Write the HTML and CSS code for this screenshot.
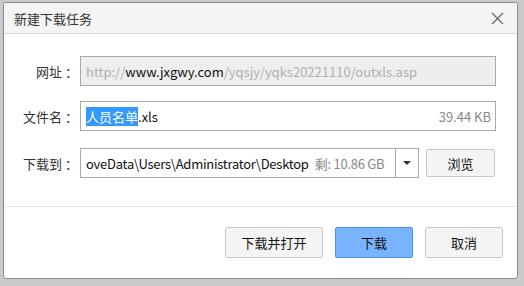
FILE: index.html
```html
<!DOCTYPE html>
<html lang="zh-CN">
<head>
    <meta charset="UTF-8">
    <title>新建下载任务</title>
    <link rel="stylesheet" href="styles.css">
</head>
<body>
    <div class="dialog">
        <!-- Title bar -->
        <div class="titlebar">
            <span class="title">新建下载任务</span>
            <svg class="close" width="13" height="13" viewBox="0 0 13 13">
                <path d="M1 1 L12 12 M12 1 L1 12" stroke="#666" stroke-width="1.2" fill="none"/>
            </svg>
        </div>

        <div class="form">
            <div class="row">
                <label>网址<span class="colon">：</span></label>
                <div class="field readonly">
                    <span class="muted">http://</span><span class="host">www.jxgwy.com</span><span class="muted">/yqsjy/yqks20221110/outxls.asp</span>
                </div>
            </div>
            <div class="row row-file">
                <label>文件名<span class="colon">：</span></label>
                <div class="field">
                    <span class="name"><span class="sel">人员名单</span>.xls</span>
                    <span class="size">39.44 KB</span>
                </div>
            </div>
            <div class="row row-path">
                <label>下载到<span class="colon">：</span></label>
                <div class="field path">
                    <div class="path-text">
                        <span>oveData\Users\Administrator\Desktop</span>
                        <span class="free">剩: 10.86 GB</span>
                    </div>
                    <div class="drop"><span class="caret"></span></div>
                </div>
                <button class="btn browse">浏览</button>
            </div>
        </div>

        <div class="actions">
            <button class="btn open">下载并打开</button>
            <button class="btn primary">下载</button>
            <button class="btn cancel">取消</button>
        </div>
    </div>
</body>
</html>
```

FILE: styles.css
```css
* {
    margin: 0;
    padding: 0;
    box-sizing: border-box;
    font-family: "Noto Sans CJK SC", "Noto Sans", sans-serif;
}

body {
    background: #c9c9c9;
    padding: 2px 0 0 3px;
    height: 286px;
    overflow: hidden;
}

/* Dialog window */
.dialog {
    width: 515px;
    height: 277px;
    background: #fff;
    border: 1px solid #8c8c8c;
    border-radius: 3px;
    overflow: hidden;
}

.titlebar {
    height: 31px;
    background: #f4f4f4;
    border-bottom: 1px solid #d6d6d6;
    display: flex;
    align-items: center;
    justify-content: space-between;
    padding: 0 13px 0 10px;
}

.title {
    font-size: 13px;
    color: #333;
}

.close {
    display: block;
}

/* Form rows */
.form {
    padding: 22px 0 28px;
    border-bottom: 1px solid #e6e6e6;
}

.row {
    display: flex;
    align-items: center;
    height: 30px;
}

.row-file {
    margin-top: 15px;
}

.row-path {
    margin-top: 17px;
}

.row label {
    width: 76px;
    text-align: right;
    font-size: 13px;
    color: #333;
    padding-right: 2px;
    white-space: nowrap;
}

.colon {
    margin-left: 3px;
}

.field {
    width: 416px;
    height: 30px;
    border: 1px solid #a9a9a9;
    display: flex;
    align-items: center;
    padding: 0 4px 0 5px;
    font-size: 13px;
    color: #111;
    white-space: nowrap;
    overflow: hidden;
}

.readonly {
    background: #eeeeee;
}

.muted {
    color: #b0b0b0;
}

.host {
    color: #111;
}

.name {
    flex: 1;
}

.sel {
    background: #3399ff;
    color: #fff;
}

.size {
    color: #888;
}

/* Path with dropdown */
.path {
    width: 339px;
    padding: 0 0 0 5px;
}

.path-text {
    flex: 1;
    display: flex;
    gap: 6px;
    overflow: hidden;
    letter-spacing: -0.25px;
}

.free {
    color: #888;
}

.drop {
    width: 23px;
    height: 100%;
    border-left: 1px solid #a9a9a9;
    display: flex;
    align-items: center;
    justify-content: center;
}

.caret {
    width: 0;
    height: 0;
    border-left: 4px solid transparent;
    border-right: 4px solid transparent;
    border-top: 4px solid #333;
}

/* Buttons */
.btn {
    height: 31px;
    background: #f4f4f4;
    border: 1px solid #c8c8c8;
    border-radius: 2px;
    font-size: 13px;
    color: #111;
}

.browse {
    width: 69px;
    height: 28px;
    margin-left: 7px;
}

.actions {
    display: flex;
    justify-content: flex-end;
    gap: 12px;
    padding: 20px 14px 0 0;
}

.open {
    width: 98px;
}

.primary {
    width: 78px;
    background: #78b4fd;
    border-color: #4a92e8;
}

.cancel {
    width: 78px;
}
```
